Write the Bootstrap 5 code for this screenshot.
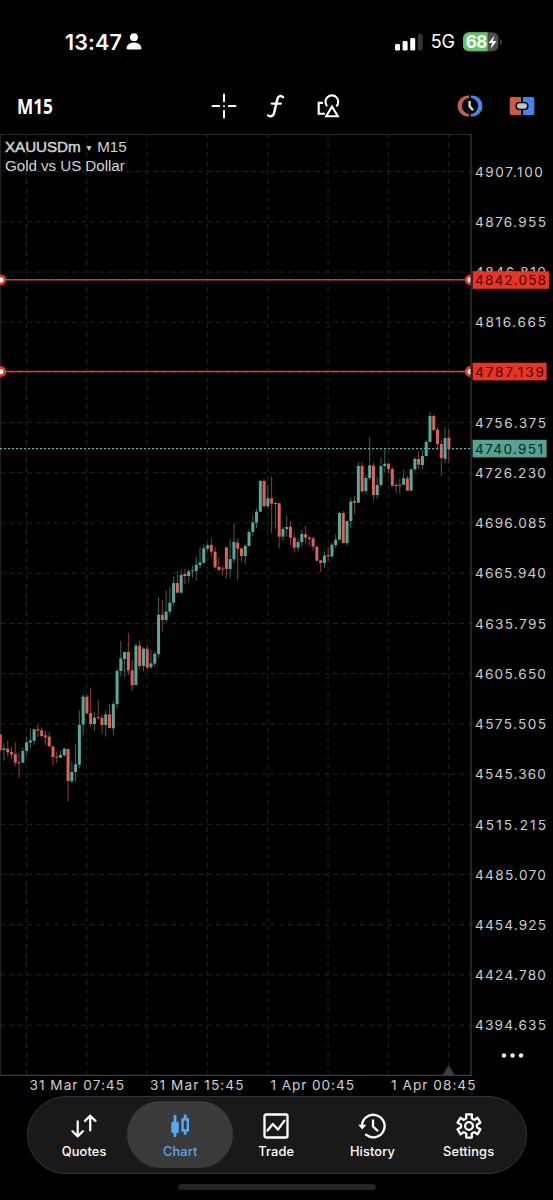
<!DOCTYPE html>
<html lang="en">
<head>
<meta charset="utf-8">
<meta name="viewport" content="width=device-width, initial-scale=1">
<title>XAUUSDm M15</title>
<link href="https://cdn.jsdelivr.net/npm/bootstrap@5.3.0/dist/css/bootstrap.min.css" rel="stylesheet">
<style>
body{background:#000;color:#fff;font-family:Inter,"Liberation Sans",sans-serif;width:553px;height:1200px;overflow:hidden}
svg{display:block;flex:none}
.statusbar{height:82px;padding:1px 50px 0 65px}
.clock{font-size:21.5px;font-weight:600;line-height:24px;letter-spacing:.15px}
.net{font-size:18px;line-height:24px;letter-spacing:0}
.toolbar{height:52px;padding:0 18px 5px 17px}
.tf{font:700 20.5px/24px "Open Sans",sans-serif;width:194px}
.tf span{display:inline-block;transform:scaleX(.84);transform-origin:left}
.plot{height:962px}
.symbol{left:5px;top:4px;font:15.2px/18px "Liberation Sans",sans-serif;color:#d4d4d4;letter-spacing:-.06px}
.symbol b{font-weight:400;-webkit-text-stroke:.45px #d4d4d4}
.symbol small{font-size:8.5px;vertical-align:1px}
.axis{font:13.6px Inter,sans-serif;letter-spacing:1.05px;fill:#cfcfcf}
.tabs{width:500px;height:78px;margin-left:26.5px;border-radius:39px;background:#191919;border:1px solid #343434;padding:4px 4px}
.tab{width:96.2px;height:67px;color:#fff;font-size:12.8px;font-weight:500;line-height:16px;letter-spacing:.15px;padding-top:12px}
.tab svg{margin-bottom:5px}
.tab.active{background:#3a3a3a;color:#57a8f5;border-radius:34px;width:106px;margin:0 -5px}
.homebar{width:198px;height:6px;border-radius:3px;background:#252525;margin:10px auto 0}
</style>
</head>
<body>
<header class="statusbar d-flex align-items-center justify-content-between">
  <div class="d-flex align-items-center gap-1">
    <span class="clock">13:47</span>
    <svg width="16" height="17" viewBox="0 0 16 17" fill="#fff"><circle cx="8" cy="4.2" r="3.9"/><path d="M.6 15.2C.6 11.6 4 9.4 8 9.4s7.4 2.2 7.4 5.8c0 .8-.4 1.2-1.2 1.2H1.8c-.8 0-1.2-.4-1.2-1.2z"/></svg>
  </div>
  <div class="d-flex align-items-center">
    <svg width="28" height="18" viewBox="0 0 28 18" fill="#fff"><rect x="0" y="11" width="5" height="6.6" rx="1.4"/><rect x="7.6" y="8" width="5" height="9.6" rx="1.4"/><rect x="15.2" y="5" width="5" height="12.6" rx="1.4"/><rect x="22.8" y="1" width="5" height="16.6" rx="1.4" fill="#333"/></svg>
    <span class="net ms-2">5G</span>
    <svg class="ms-2" width="40" height="20" viewBox="0 0 40 20"><defs><clipPath id="bat"><rect x="0" y=".3" width="35.5" height="19" rx="6"/></clipPath></defs><g clip-path="url(#bat)"><rect width="40" height="20" fill="#4b4b4d"/><rect width="24.6" height="20" fill="#65c466"/></g><path d="M37 7v6c2.3-1 2.3-5 0-6z" fill="#4b4b4d"/><text x="2.8" y="16" font-size="17" font-weight="700" fill="#fff" textLength="21.5">68</text><path d="M31.6 3.6 25.4 11h3.8l-1.8 6 6.3-7.9h-3.9z" fill="#fff"/></svg>
  </div>
</header>

<nav class="toolbar d-flex align-items-center">
  <div class="tf"><span>M15</span></div>
  <svg width="26" height="26" viewBox="0 0 26 26" stroke="#fff" stroke-width="2" stroke-linecap="round"><path d="M13 1.5v6.7M13 17.8v6.7M1.5 13h6.7M17.8 13h6.7M13 13h.01"/></svg>
  <svg style="margin-left:29px" width="20" height="26" viewBox="0 0 20 26" fill="none" stroke="#fff" stroke-linecap="round"><path d="M17 4.2C15 2.2 12.3 2.7 11.5 5.8L8 20.2C7.3 23.1 4.7 24 2.2 22.5" stroke-width="2.5"/><path d="M5.7 10.6h9.2" stroke-width="2.2"/></svg>
  <svg style="margin-left:30px" width="26" height="26" viewBox="0 0 26 26" fill="none" stroke="#fff" stroke-width="2.1"><path d="M11.2 13.2A6.4 6.4 0 1 1 20.3 13.4"/><path d="M7 9.9H2.7v10.8h6.2"/><path d="M16 13.6l5.8 9.7H10.2z"/></svg>
  <div class="ms-auto d-flex align-items-center">
    <svg style="margin-right:26px" width="26" height="22" viewBox="0 0 26 22"><path d="M12.2.5v21H11A10.5 10.5 0 0 1 11 .5z" fill="#c95948"/><path d="M13.8.5v21H15A10.5 10.5 0 0 0 15 .5z" fill="#4385ef"/><circle cx="13" cy="11" r="8.1" fill="#000"/><path d="M12.6 6v5.2l3.4 4" fill="none" stroke="#d4d9df" stroke-width="2.4"/></svg>
    <svg width="26" height="20" viewBox="0 0 26 20"><path d="M2.5 1H12v18H2.5A1.8 1.8 0 0 1 .7 17.2V2.8A1.8 1.8 0 0 1 2.5 1z" fill="#c95948"/><path d="M14 1h9.5a1.8 1.8 0 0 1 1.8 1.8v14.4a1.8 1.8 0 0 1-1.8 1.8H14z" fill="#4385ef"/><rect x="6.4" y="6" width="13.2" height="8" rx="4" fill="#000"/><rect x="8" y="7.3" width="10" height="5.4" rx="2.4" fill="#bcc3ca"/></svg>
  </div>
</nav>

<main class="plot position-relative">
  <svg id="chart" width="553" height="962" viewBox="0 134 553 962"></svg>
  <div class="symbol position-absolute"><b>XAUUSDm</b> <small>▼</small> M15<br>Gold vs US Dollar</div>
</main>

<nav class="tabs d-flex">
  <div class="tab d-flex flex-column align-items-center" style="margin-left:4.5px"><svg width="26" height="26" viewBox="0 0 26 26" fill="none" stroke="#fff" stroke-width="2.2" stroke-linecap="round" stroke-linejoin="round"><path d="M6.7 8.3v15M1.5 18.2l5.2 5.2 5.2-5.2M19.2 17.5V2.7M14 7.9l5.2-5.2 5.2 5.2"/></svg>Quotes</div>
  <div class="tab active d-flex flex-column align-items-center"><svg width="24" height="26" viewBox="0 0 24 26" fill="none" stroke="#57a8f5"><path d="M7 2v22M17.2 1.6v4.6M17.2 17.8v4" stroke-width="2.8"/><rect x="3.3" y="9" width="7.5" height="11" rx="1" fill="#57a8f5" stroke="none"/><rect x="14.6" y="6.3" width="5.2" height="11.2" stroke-width="2.4"/></svg>Chart</div>
  <div class="tab d-flex flex-column align-items-center"><svg width="26" height="26" viewBox="0 0 26 26" fill="none" stroke="#fff" stroke-width="2.3" stroke-linejoin="round"><rect x="1.5" y="1.5" width="23" height="23" rx="1.5"/><path d="M4.5 17.5 9.8 11l5.1 5.6 6.6-9" stroke-linecap="round"/></svg>Trade</div>
  <div class="tab d-flex flex-column align-items-center"><svg width="28" height="26" viewBox="0 0 28 26" fill="none" stroke="#fff" stroke-width="2.3"><path d="M4 13.5A11.3 11.3 0 1 1 8 21.7" stroke-linecap="round"/><path d="M.2 11.7h8.2l-4.1 4.7z" fill="#fff" stroke="none"/><path d="M15 6.5v7l5 4.7"/></svg>History</div>
  <div class="tab d-flex flex-column align-items-center"><svg width="26" height="26" viewBox="-13 -13 26 26" fill="none" stroke="#fff" stroke-width="2.3" stroke-linejoin="round"><path id="gear"/><circle r="3.9"/></svg>Settings</div>
</nav>
<div class="homebar"></div>

<script src="https://cdn.jsdelivr.net/npm/bootstrap@5.3.0/dist/js/bootstrap.bundle.min.js"></script>
<script>
// Gear outline: six flat teeth around the hub
let gear = [];
for (let k = 0; k < 6; k++) {
  for (const [a, r] of [[-30, 7.8], [-19, 8.3], [-14, 11.9], [14, 11.9], [19, 8.3]]) {
    const t = (k * 60 + a - 90) * Math.PI / 180;
    gear.push((r * Math.cos(t)).toFixed(2) + ' ' + (r * Math.sin(t)).toFixed(2));
  }
}
document.getElementById('gear').setAttribute('d', 'M' + gear.join('L') + 'Z');

// Candles: direction, body top, body bottom, high, low, in thirds of a pixel below each group's base
const groups = [
 [640, `r284,330,282,335 g325,330,310,362 r326,337,302,350 r336,343,320,357 r342,368,308,378 r367,370,340,414 g333,368,322,368 g307,333,290,345 g301,308,264,325 g268,302,266,315 r268,272,253,290 r271,288,262,292 r286,292,272,315 r290,319,277,320 r319,351,318,377 r350,353,335,370 g345,353,333,353 g326,346,324,350 r327,423,326,484 g396,424,365,430 g373,396,312,425 g254,374,212,384 g170,254,163,286 r170,220,165,222 r219,252,143,257 g233,252,216,273 r231,234,180,240 r233,255,225,282 g223,255,212,290 r223,264,192,266 g192,265,183,287 g93,192,85,204 g55,93,3,110 g36,57,34,112`],
 [560, `r276,331,220,345 r331,376,300,394 g257,375,250,376 r257,318,243,328 g266,318,262,335 r267,323,255,328 g310,322,270,326 g281,311,275,320 g164,282,112,292 r164,180,120,214 g155,180,92,188 g128,155,80,166 g69,128,48,138 r69,98,34,100 g45,98,28,102 r42,48,27,72 g34,48,27,68 g31,34,17,52 g14,33,-10,62`],
 [460, `g307,315,262,325 g265,308,253,312 g256,266,250,273 r255,275,235,290 r275,322,260,325 r321,329,293,335 r326,329,318,347 r262,327,260,355 g297,327,238,355 g246,298,190,310 r248,266,235,362 r265,288,264,305 g258,288,250,312 g216,258,208,258 g187,216,167,228 g155,188,145,205 g63,155,60,157 r63,139,58,140 g115,138,75,145 r115,131,50,220 g129,132,128,208 r130,230,128,265 g207,230,200,240 g201,207,168,230`],
 [400, `r380,413,363,435 r413,443,398,458 g426,443,415,455 g402,426,390,440 r403,413,378,430 r413,417,408,437 r415,440,410,452 r440,482,438,484 r481,489,480,516 g467,489,455,503 r465,469,440,483 g434,469,428,475 g419,435,402,445 g339,419,335,422 r339,429,333,431 g363,429,362,436 g305,363,293,385 r303,308,288,342 g198,308,186,309 r198,274,187,278 g234,273,225,283 g196,234,112,240 r197,285,188,302 g255,285,230,298 g198,255,173,262 g191,198,148,218 r191,207,190,220 r207,257,200,260 g255,258,247,280 r254,256,235,283 g235,254,210,255 r235,272,228,273 g208,272,205,273 g177,208,170,214 r177,194,155,208 g168,195,150,209 g126,168,120,168 g48,126,36,127 r48,90,43,94 r89,132,82,150 r132,174,120,228 g114,176,80,190 r113,147,85,190`]
];
let s = '';
const line = (x1, y1, x2, y2, c, w, d) => s += `<line x1="${x1}" y1="${y1}" x2="${x2}" y2="${y2}" stroke="${c}" stroke-width="${w}"${d ? ` stroke-dasharray="${d}"` : ''}/>`;
const label = (x, y, t, c, len) => s += `<text class="axis" x="${x}" y="${y}"${len ? ` textLength="${len}"` : ''}${c ? ` style="fill:${c}"` : ''}>${t}</text>`;
const step = 50.21;
for (let i = 0; i < 18; i++) {
  const y = 171.6 + i * step;
  line(0, y, 474, y, '#232327', 1, '5 4');
  // the 4787 level sits on its own grid line and carries the price tag instead
  if (i !== 4) label(475, y + 5.2, (4907.1 - i * 30.145).toFixed(3), '', i ? 72 : 69);
}
for (let i = 0; i < 8; i++) {
  const x = 26.4 + i * 60.33;
  line(x, 134, x, i % 2 ? 1075 : 1078, '#232327', 1, '5 4');
}
line(.5, 134, .5, 1075, '#242424', 1);
let n = 0;
for (const [base, list] of groups) for (const c of list.split(' ')) {
  const [t, b, h, l] = c.slice(1).split(',').map(v => base + v / 3), x = .2 + n++ * 3.77;
  const up = c[0] === 'g';
  line(x, h, x, l, up ? '#35756b' : '#a3433f', .9);
  s += `<rect x="${x - 1.5}" y="${t}" width="3" height="${Math.max(1, b - t)}" fill="${up ? '#56a99b' : '#e0605a'}"/>`;
}
line(0, 448.6, 471, 448.6, '#5fb0a4', 1.2, '2.2 1.8');
for (const y of [279.8, 371.5]) {
  line(0, y, 470, y, '#e03a2c', 1.5);
  for (const x of [.8, 470.2]) s += `<circle cx="${x}" cy="${y}" r="4" fill="#fff" stroke="#e03a2c" stroke-width="2.8"/>`;
}
s += '<rect x="471" y="275" width="2" height="110" fill="#000"/><path d="M442.7 1075l6-10 6 10z" fill="#3d3d3d"/>';
line(0, 134.2, 471.5, 134.2, '#3c3c3c', 1.2);
line(471, 134, 471, 1075.8, '#3c3c3c', 1.2);
line(0, 1075.3, 471.5, 1075.3, '#3c3c3c', 1.2);
for (const [y, t, w, bg, ink, len] of [[280, '4842.058', 76.5, '#ea3323', '#3a0603', 72], [371.6, '4787.139', 74, '#ea3323', '#3a0603', 70], [448.6, '4740.951', 74, '#56a396', '#06231e', 69]]) {
  s += `<rect x="472.6" y="${y - 8.8}" width="${w}" height="17.6" fill="${bg}"/>`;
  label(475, y + 5, t, ink, len);
}
label(29.5, 1090.3, '31 Mar 07:45', '', 95.5);
label(150, 1090.3, '31 Mar 15:45', '', 94.5);
label(270.5, 1090.3, '1 Apr 00:45', '', 84.5);
label(391, 1090.3, '1 Apr 08:45', '', 85.5);
for (const x of [504, 512.5, 521]) s += `<circle cx="${x}" cy="1055.5" r="2.2" fill="#eee"/>`;
document.getElementById('chart').innerHTML = s;
</script>
</body>
</html>
